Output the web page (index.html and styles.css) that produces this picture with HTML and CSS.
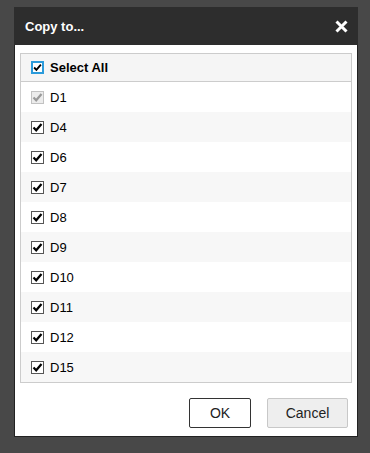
FILE: index.html
```html
<!DOCTYPE html>
<html>
<head>
<meta charset="utf-8">
<link rel="stylesheet" href="styles.css">
</head>
<body>
<div class="dialog">
  <div class="header">
    <span class="title">Copy to...</span>
    <svg class="close" width="13" height="13" viewBox="0 0 13 13"><path d="M1.5 1.5 L11.5 11.5 M11.5 1.5 L1.5 11.5" stroke="#fff" stroke-width="3" fill="none"/></svg>
  </div>
  <div class="body">
    <div class="list">
      <div class="row head">
        <span class="cb focus"><svg viewBox="0 0 13 13"><path d="M2.5 6.5 L5.2 9.3 L10.5 3" stroke="#000" stroke-width="2.2" fill="none"/></svg></span>
        <span class="label bold">Select All</span>
      </div>
      <div class="row">
        <span class="cb disabled"><svg viewBox="0 0 13 13"><path d="M2.5 6.5 L5.2 9.3 L10.5 3" stroke="#999" stroke-width="2.2" fill="none"/></svg></span>
        <span class="label">D1</span>
      </div>
      <div class="row alt">
        <span class="cb"><svg viewBox="0 0 13 13"><path d="M2.5 6.5 L5.2 9.3 L10.5 3" stroke="#000" stroke-width="2.2" fill="none"/></svg></span>
        <span class="label">D4</span>
      </div>
      <div class="row">
        <span class="cb"><svg viewBox="0 0 13 13"><path d="M2.5 6.5 L5.2 9.3 L10.5 3" stroke="#000" stroke-width="2.2" fill="none"/></svg></span>
        <span class="label">D6</span>
      </div>
      <div class="row alt">
        <span class="cb"><svg viewBox="0 0 13 13"><path d="M2.5 6.5 L5.2 9.3 L10.5 3" stroke="#000" stroke-width="2.2" fill="none"/></svg></span>
        <span class="label">D7</span>
      </div>
      <div class="row">
        <span class="cb"><svg viewBox="0 0 13 13"><path d="M2.5 6.5 L5.2 9.3 L10.5 3" stroke="#000" stroke-width="2.2" fill="none"/></svg></span>
        <span class="label">D8</span>
      </div>
      <div class="row alt">
        <span class="cb"><svg viewBox="0 0 13 13"><path d="M2.5 6.5 L5.2 9.3 L10.5 3" stroke="#000" stroke-width="2.2" fill="none"/></svg></span>
        <span class="label">D9</span>
      </div>
      <div class="row">
        <span class="cb"><svg viewBox="0 0 13 13"><path d="M2.5 6.5 L5.2 9.3 L10.5 3" stroke="#000" stroke-width="2.2" fill="none"/></svg></span>
        <span class="label">D10</span>
      </div>
      <div class="row alt">
        <span class="cb"><svg viewBox="0 0 13 13"><path d="M2.5 6.5 L5.2 9.3 L10.5 3" stroke="#000" stroke-width="2.2" fill="none"/></svg></span>
        <span class="label">D11</span>
      </div>
      <div class="row">
        <span class="cb"><svg viewBox="0 0 13 13"><path d="M2.5 6.5 L5.2 9.3 L10.5 3" stroke="#000" stroke-width="2.2" fill="none"/></svg></span>
        <span class="label">D12</span>
      </div>
      <div class="row alt">
        <span class="cb"><svg viewBox="0 0 13 13"><path d="M2.5 6.5 L5.2 9.3 L10.5 3" stroke="#000" stroke-width="2.2" fill="none"/></svg></span>
        <span class="label">D15</span>
      </div>
    </div>
    <div class="buttons">
      <button class="btn ok">OK</button>
      <button class="btn cancel">Cancel</button>
    </div>
  </div>
</div>
</body>
</html>
```
FILE: styles.css
```css
html, body {
  margin: 0;
  padding: 0;
}
body {
  background: #484848;
  width: 370px;
  height: 453px;
  overflow: hidden;
  font-family: "Liberation Sans", Arial, sans-serif;
  font-size: 13px;
  color: #000;
}
.dialog {
  margin: 7px 0 0 14px;
  width: 344px;
  box-sizing: border-box;
  border: 1px solid #222;
  border-top: none;
  background: #fff;
}
.header {
  height: 38px;
  background: #2d2d2d;
  margin: 0 -1px;
  display: flex;
  align-items: center;
  justify-content: space-between;
  padding: 0 10px 0 11px;
}
.title {
  color: #fff;
  font-weight: bold;
  font-size: 13px;
}
.close {
  display: block;
  margin-top: 0;
}
.body {
  padding: 8px 5px 8px 5px;
}
.list {
  border: 1px solid #cccccc;
}
.row {
  height: 30px;
  display: flex;
  align-items: center;
  padding-left: 10px;
  background: #fff;
}
.row.alt {
  background: #f7f7f7;
}
.row.head {
  height: 27px;
  background: #f5f5f5;
  border-bottom: 1px solid #cccccc;
}
.cb {
  width: 13px;
  height: 13px;
  box-sizing: border-box;
  border: 1px solid #555;
  background: #fff;
  display: flex;
  align-items: center;
  justify-content: center;
  flex: none;
}
.cb svg {
  width: 13px;
  height: 13px;
  flex: none;
}
.cb.focus {
  border: 2px solid #2b9bdb;
}
.cb.focus svg {
  width: 11px;
  height: 11px;
}
.cb.disabled {
  border-color: #c2c2c2;
  background: #ececec;
}
.label {
  margin-left: 6px;
  line-height: 1;
}
.label.bold {
  font-weight: bold;
}
.buttons {
  display: flex;
  justify-content: flex-end;
  gap: 16px;
  margin-top: 15px;
  padding-right: 4px;
}
.btn {
  height: 30px;
  font-family: "Liberation Sans", Arial, sans-serif;
  font-size: 14px;
  color: #222;
  border-radius: 2px;
  padding: 0;
  margin: 0;
}
.btn.ok {
  width: 62px;
  background: #fff;
  border: 1px solid #333;
}
.btn.cancel {
  width: 81px;
  background: #eeeeee;
  border: 1px solid #c8c8c8;
}
```
